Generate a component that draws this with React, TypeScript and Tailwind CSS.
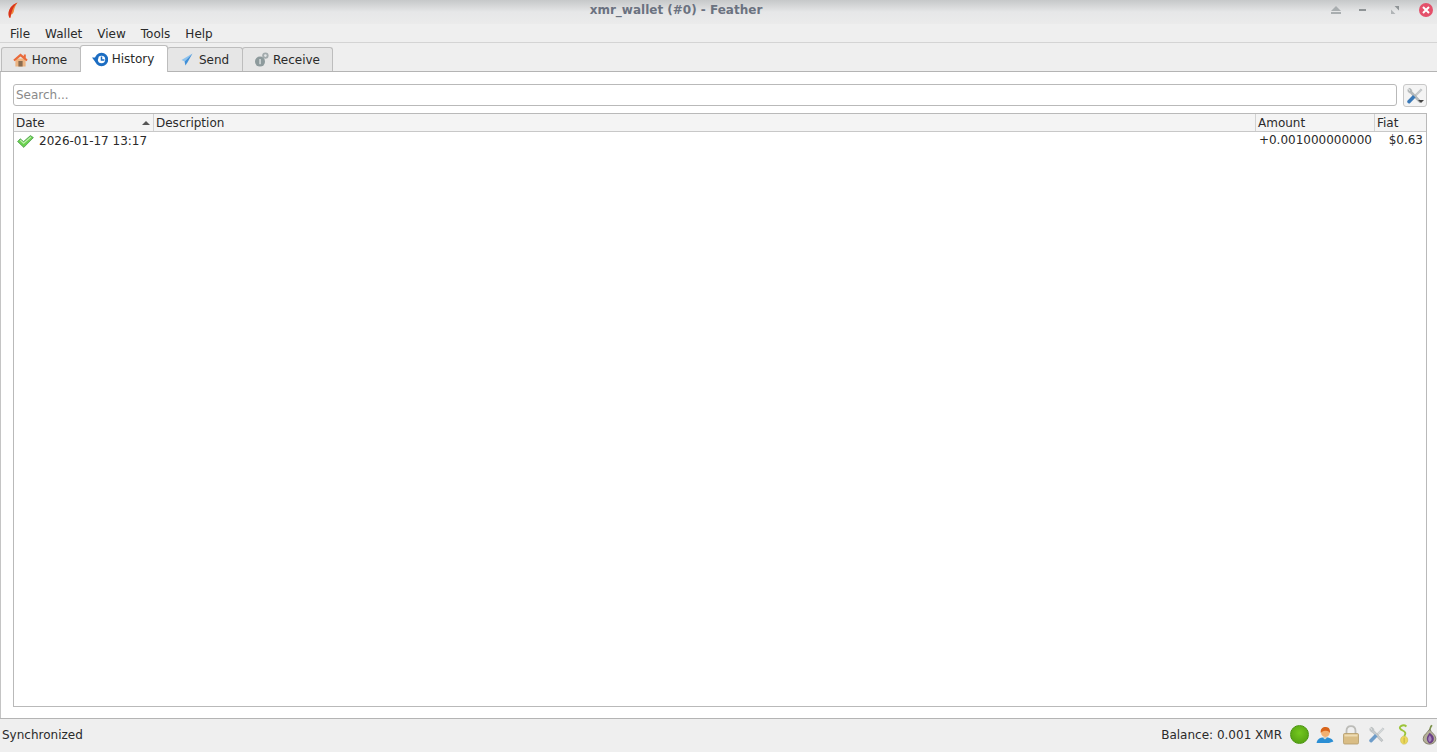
import React from 'react';

const FeatherLogo = () => (
  <svg width="12" height="17" viewBox="0 0 12 17">
    <path d="M10.5 0.5C6.5 2 3 5 1.8 9.5C1.3 11.5 1.6 13.5 2.2 15.5L3.4 15.8C3.4 14.6 3.7 13.6 4.3 12.6C6.5 11.6 6.8 9.6 7 8.2C7.6 5.4 9 3 10.5 0.5Z" fill="#ee8a3c" />
    <path d="M10.5 0.5C7.5 3.5 5 6.5 3.4 15.8L2.2 15.5C1.6 13.5 1.3 11.5 1.8 9.5C3 5 6.5 2 10.5 0.5Z" fill="#d8321e" />
  </svg>
);

const HomeIcon = () => (
  <svg width="15" height="14" viewBox="0 0 15 14">
    <rect x="2.4" y="5.5" width="10.2" height="8" fill="#ecb482" />
    <rect x="5.4" y="8" width="4.2" height="5.5" fill="#8a6c50" />
    <path d="M7.5 0.6L0.3 6.8L1.6 8.2L7.5 3.4L13.4 8.2L14.7 6.8L12.8 5.1V1.6H10.8V3.3Z" fill="#ea6a3a" />
  </svg>
);

const HistoryIcon = () => (
  <svg width="16" height="15" viewBox="0 0 16 15">
    <circle cx="9.5" cy="7.5" r="5.2" fill="#fff" stroke="#1c6dc2" strokeWidth="3" />
    <path d="M9.5 4.4V8H12.4" fill="none" stroke="#1c6dc2" strokeWidth="1.5" />
    <path d="M0 5.6H7L3.5 10.2Z" fill="#1c6dc2" />
  </svg>
);

const SendIcon = () => (
  <svg width="12" height="13" viewBox="0 0 12 13">
    <path d="M11.5 0.5L0.5 7L3.6 8.4Z" fill="#8cc2ee" />
    <path d="M11.5 0.5L3.6 8.4L4.4 12.5L6.4 9.6Z" fill="#3f8fd8" />
  </svg>
);

const ReceiveIcon = () => (
  <svg width="14" height="15" viewBox="0 0 14 15">
    <circle cx="10.4" cy="3.6" r="3.2" fill="#a3abad" />
    <circle cx="10.4" cy="3.6" r="1.3" fill="#e3e6e7" />
    <circle cx="5" cy="9.6" r="5" fill="#8d9a9c" />
    <rect x="4.3" y="7" width="1.5" height="5.2" fill="#d6dcdd" />
  </svg>
);

const CheckIcon = () => (
  <svg width="17" height="13" viewBox="0 0 17 13">
    <path d="M0.6 6.6L3.2 3.8L6.6 6.6L13.4 0.6L16.4 2.6L6.8 12.4Z" fill="#6ad24e" stroke="#4f9a52" strokeWidth="0.8" strokeLinejoin="round" />
    <path d="M3.2 5.2L6.6 8.2L14 1.8" fill="none" stroke="#c2f0b2" strokeWidth="1.1" />
  </svg>
);

// crossed screwdriver and wrench, used in the search button and the status bar
const ToolsIcon = ({ size = 20, muted = false }: { size?: number; muted?: boolean }) => (
  <svg width={size} height={size} viewBox="0 0 20 20">
    <path d="M9.4 9.2L16.6 2L18 3.4L10.8 10.6Z" fill={muted ? '#d4d8da' : '#c6cacc'} stroke="#a2a7a9" strokeWidth="0.4" />
    <path d="M2.2 2.6C1.6 4.4 2.4 6.4 4.6 6.8L14.4 17C15.2 17.8 17 16.2 16.2 15.2L6.6 5C6.8 3 5 1.2 3 1.4L5 3.6L4.2 5Z" fill={muted ? '#c6cbce' : '#b4b9bb'} stroke="#94999b" strokeWidth="0.4" />
    <path d="M1.6 15.2L7.8 9L10.6 11.8L4.4 18C2.8 19.2 0.4 16.8 1.6 15.2Z" fill={muted ? '#6d9cc9' : '#3878b8'} />
  </svg>
);

const PersonIcon = () => (
  <svg width="18" height="18" viewBox="0 0 18 18">
    <path d="M0.6 17C1 13.4 3.4 11.6 8 11.2C13 11 16.6 12.6 17.4 15.6L13 17Z" fill="#2a8ed4" />
    <path d="M6.4 11.2L9 13.6L11.4 11.2Z" fill="#e8dcc8" />
    <circle cx="9.4" cy="6.8" r="4.3" fill="#f2b070" />
    <path d="M4.8 7C4 2.6 7 0.8 10 1C13 1.2 14.6 3.6 13.8 7C13 5.2 11 4.4 9 4.8C7.2 5 5.8 5.6 4.8 7Z" fill="#d8641a" />
  </svg>
);

const LockIcon = () => (
  <svg width="18" height="20" viewBox="0 0 18 20">
    <path d="M4.5 9V6C4.5 3 6.5 1.2 9 1.2C11.5 1.2 13.5 3 13.5 6V9" fill="none" stroke="#bcbcb8" strokeWidth="1.8" />
    <rect x="1.5" y="8.5" width="15" height="10.5" rx="1.2" fill="#d9bd85" stroke="#b39a68" strokeWidth="0.8" />
    <rect x="2.5" y="9.5" width="13" height="2" fill="#eddcb4" />
  </svg>
);

const SeedIcon = () => (
  <svg width="13" height="21" viewBox="0 0 12 20">
    <path d="M6.4 19.2C9 19.2 10.4 17 10 14.6C9.6 12.4 8 11.2 6.4 11.4C4.2 11.6 3 13.8 3.2 15.8C3.4 17.8 4.6 19.2 6.4 19.2Z" fill="#ecd85c" stroke="#c6b844" strokeWidth="0.5" />
    <path d="M6.6 11.4C8.6 9 7.8 7.4 5.2 6.2C2.6 5 1.6 3.4 3.6 2C5.2 1 7.4 1.2 8.8 2.4" fill="none" stroke="#9cc43a" strokeWidth="1.8" />
    <path d="M6.6 13V18" stroke="#b9a93c" strokeWidth="0.8" />
  </svg>
);

const TorIcon = () => (
  <svg width="15" height="21" viewBox="0 0 14 20">
    <path d="M8.6 0.8C7.2 2.6 6.8 4 6.6 6L8 6.2C8.2 4.4 8.8 2.8 10 1.6Z" fill="#7a9048" />
    <path d="M6.4 5.6C5.6 8.2 1 9.8 1 14C1 17.2 3.6 19.2 7 19.2C10.4 19.2 13 17.2 13 14C13 9.8 8.4 8.2 7.8 5.6Z" fill="#b4b098" stroke="#5f5a44" strokeWidth="0.6" />
    <path d="M7.2 8.4C9 10 11.2 11.4 11.2 14C11.2 16.4 9.4 18.2 7.2 18.6C5.6 17.6 4.4 16 4.4 14C4.4 11.6 6 10.2 7.2 8.4Z" fill="#6b3f86" />
    <path d="M7.2 10.6C8 11.6 9 12.6 9 14.2C9 15.6 8.2 16.6 7.2 17.2C6.4 16.4 5.8 15.4 5.8 14.2C5.8 12.8 6.6 11.8 7.2 10.6Z" fill="#a786bb" />
  </svg>
);

const WindowButtons = () => (
  <div className="flex items-center justify-end pr-[4px] pb-[4px]">
    <svg width="10" height="8" viewBox="0 0 10 8" className="mr-[18px]">
      <path d="M5 0L10 5H0Z" fill="#a9aeb0" />
      <rect y="6" width="10" height="2" fill="#a9aeb0" />
    </svg>
    <div className="w-[7px] h-[2px] bg-[#8f9496] mr-[25px]" />
    <svg width="8" height="8" viewBox="0 0 8 8" className="mr-[20px]">
      <path d="M3.6 0H8V4.4Z" fill="#8f9496" />
      <path d="M0 3.6V8H4.4Z" fill="#b0b4b6" />
    </svg>
    <div className="w-[14px] h-[14px] rounded-full bg-[#e4506a] flex items-center justify-center">
      <svg width="8" height="8" viewBox="0 0 8 8">
        <path d="M1 1L7 7M7 1L1 7" stroke="#fff" strokeWidth="2" />
      </svg>
    </div>
  </div>
);

const menus = ['File', 'Wallet', 'View', 'Tools', 'Help'];

const tabs = [
  { label: 'Home', icon: <HomeIcon />, width: 'w-[80px]', gap: 'gap-[4px]', pad: 'pr-[2px]' },
  { label: 'History', icon: <HistoryIcon />, width: 'w-[88px]', gap: 'gap-[4px]', pad: 'pr-[2px]', active: true },
  { label: 'Send', icon: <SendIcon />, width: 'w-[76px]', gap: 'gap-[6px]', pad: '' },
  { label: 'Receive', icon: <ReceiveIcon />, width: 'w-[91px]', gap: 'gap-[4px]', pad: '' },
];

const App = () => {
  return (
    <div className="w-[1437px] h-[752px] overflow-hidden flex flex-col bg-[#efefef] text-[12px] text-[#2a2a2a] font-['DejaVu_Sans',sans-serif]">
      {/* title bar */}
      <div className="h-[24px] shrink-0 grid grid-cols-[200px_1fr_285px] items-center bg-gradient-to-b from-[#c6c8c9] via-[#e6e7e8] to-[#ebebeb]">
        <div className="pl-[7px] pb-[4px] flex items-center">
          <FeatherLogo />
        </div>
        <div className="text-center font-bold text-[#6b7280] leading-none pb-[5px]">xmr_wallet (#0) - Feather</div>
        <WindowButtons />
      </div>

      {/* menu bar */}
      <div className="h-[19px] shrink-0 flex items-center pl-[10px] pt-[1px] gap-[15px] border-b border-[#d4d4d4]">
        {menus.map(m => (
          <span key={m} className="leading-none">{m}</span>
        ))}
      </div>

      {/* tab bar */}
      <div className="h-[29px] shrink-0 flex items-end pl-[1px] border-b border-[#b4b4b4]">
        {tabs.map(t => (
          <div
            key={t.label}
            className={`flex items-center justify-center rounded-t-[3px] border border-b-0 border-[#bdbdbd] -ml-px first:ml-0 ${t.gap} ${t.width} ${t.pad} ${
              t.active
                ? 'h-[27px] bg-white -mb-px relative'
                : 'h-[24px] bg-[#e6e6e6]'
            }`}
          >
            {t.icon}
            <span>{t.label}</span>
          </div>
        ))}
      </div>

      {/* history page */}
      <div className="flex-1 min-h-0 flex flex-col bg-white border-l border-[#c4c4c4] pl-[12px] pr-[10px] pt-[12px] pb-[11px]">
        <div className="flex items-start gap-[6px] h-[23px] shrink-0">
          <div className="flex-1 h-[22px] border border-[#b9b9b9] rounded-[3px] flex items-center px-[2px] pb-[1px] text-[#8a8a8a]">Search...</div>
          <div className="relative w-[24px] h-[23px] border border-[#c8c8c8] rounded-[3px] bg-[#f4f4f4] flex items-center justify-center">
            <ToolsIcon size={18} />
            <svg width="6" height="3" viewBox="0 0 6 3" className="absolute right-[2px] bottom-[3px]">
              <path d="M0 0H6L3 3Z" fill="#444" />
            </svg>
          </div>
        </div>

        <div className="flex-1 min-h-0 mt-[6px] flex flex-col border border-[#b9b9b9]">
          <div className="h-[18px] shrink-0 flex bg-[#f4f4f4] border-b border-[#c8c8c8] leading-none">
            <div className="w-[140px] flex items-center justify-between pl-[2px] pr-[3px] border-r border-[#d2d2d2]">
              <span>Date</span>
              <svg width="8" height="4" viewBox="0 0 8 4"><path d="M4 0L8 4H0Z" fill="#555" /></svg>
            </div>
            <div className="flex-1 flex items-center pl-[2px] border-r border-[#d2d2d2]">Description</div>
            <div className="w-[119px] flex items-center pl-[2px] border-r border-[#d2d2d2]">Amount</div>
            <div className="w-[51px] flex items-center pl-[2px]">Fiat</div>
          </div>
          <div className="h-[18px] shrink-0 flex leading-none whitespace-nowrap">
            <div className="w-[140px] flex items-center pl-[3px] gap-[5px]">
              <CheckIcon />
              <span>2026-01-17 13:17</span>
            </div>
            <div className="flex-1" />
            <div className="w-[119px] flex items-center justify-end pr-[3px] pb-[3px]">+0.001000000000</div>
            <div className="w-[51px] flex items-center justify-end pr-[3px] pb-[3px]">$0.63</div>
          </div>
        </div>
      </div>

      {/* status bar */}
      <div className="h-[34px] shrink-0 flex items-center justify-between border-t border-[#b4b4b4] pl-[2px] pb-[2px]">
        <span>Synchronized</span>
        <div className="flex items-center mr-[-5px]">
          <span className="mr-[4px]">Balance: 0.001 XMR</span>
          <div className="w-[26px] flex justify-center">
            <div className="w-[19px] h-[19px] rounded-full bg-[radial-gradient(circle_at_50%_40%,#74c81e,#4f9a10)] border border-[#4a9410]" />
          </div>
          <div className="w-[26px] flex justify-center"><PersonIcon /></div>
          <div className="w-[26px] flex justify-center"><LockIcon /></div>
          <div className="w-[26px] flex justify-center"><ToolsIcon size={18} muted /></div>
          <div className="w-[26px] flex justify-center"><SeedIcon /></div>
          <div className="w-[26px] flex justify-center"><TorIcon /></div>
        </div>
      </div>
    </div>
  );
};

export default App;
